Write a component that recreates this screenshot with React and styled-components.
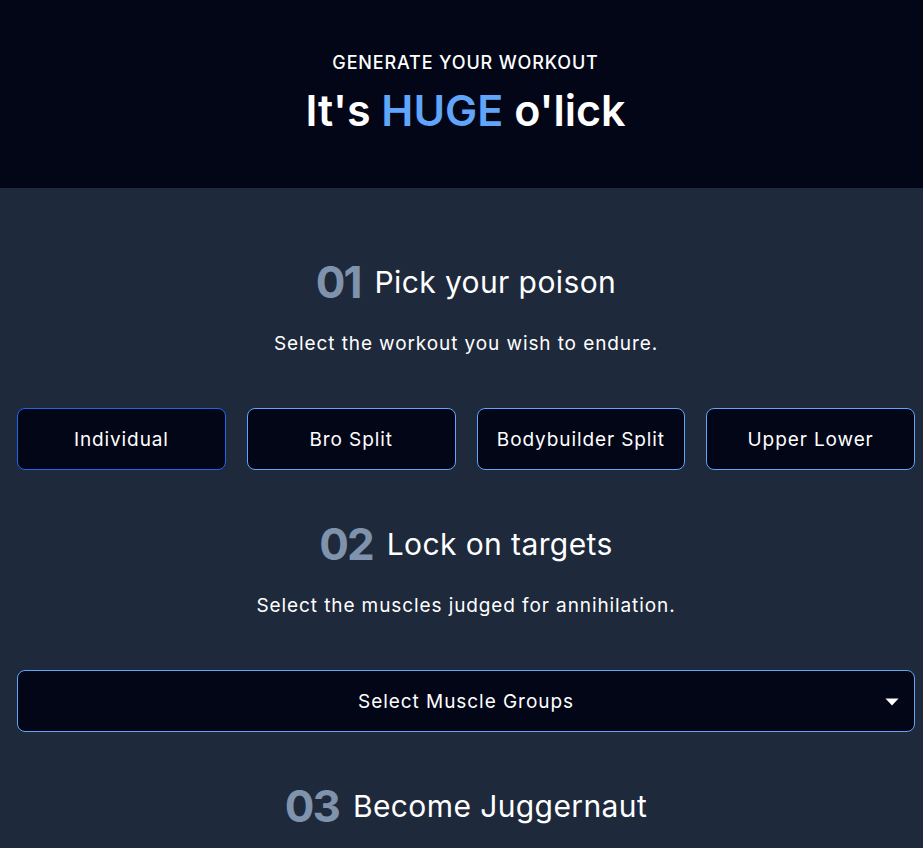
import React, { useState } from "react";
import styled, { createGlobalStyle } from "styled-components";

const GlobalStyle = createGlobalStyle`
  * { box-sizing: border-box; }
  body {
    margin: 0;
    background: #1e293b;
    font-family: "Inter", "Noto Sans", sans-serif;
    color: #fff;
  }
`;

const splits = ["Individual", "Bro Split", "Bodybuilder Split", "Upper Lower"];

export default function App() {
  const [active, setActive] = useState("Individual");
  return (
    <>
      <GlobalStyle />
      <Hero>
        <Kicker>GENERATE YOUR WORKOUT</Kicker>
        <Title>
          It's <Blue>HUGE</Blue> o'lick
        </Title>
      </Hero>
      <Main>
        <Section>
          <Header>
            <Num>01</Num>
            <HeadText>Pick your poison</HeadText>
          </Header>
          <Sub>Select the workout you wish to endure.</Sub>
          <Grid>
            {splits.map((s) => (
              <Choice key={s} $active={active === s} onClick={() => setActive(s)}>
                {s}
              </Choice>
            ))}
          </Grid>
        </Section>
        <Section>
          <Header>
            <Num>02</Num>
            <HeadText>Lock on targets</HeadText>
          </Header>
          <Sub>Select the muscles judged for annihilation.</Sub>
          <Dropdown>
            <span>Select Muscle Groups</span>
            <Caret>
              <svg width="14" height="8" viewBox="0 0 14 8">
                <path d="M0.5 0.5h13L7 7.5z" fill="#fff" />
              </svg>
            </Caret>
          </Dropdown>
        </Section>
        <Section>
          <Header>
            <Num>03</Num>
            <HeadText>Become Juggernaut</HeadText>
          </Header>
        </Section>
      </Main>
    </>
  );
}

const Hero = styled.header`
  background: #020617;
  height: 188px;
  display: flex;
  flex-direction: column;
  align-items: center;
  padding: 52px 0 0 8px;
`;
const Kicker = styled.p`
  margin: 0;
  font-size: 18px;
  font-weight: 500;
  line-height: 22px;
  letter-spacing: 0.85px;
`;
const Title = styled.h1`
  margin: 10px 0 0;
  font-size: 43px;
  font-weight: 600;
  line-height: 52px;
`;
const Blue = styled.span`
  color: #60a5fa;
`;
const Main = styled.main`
  padding: 69px 8px 0 17px;
  display: flex;
  flex-direction: column;
  gap: 49px;
`;
const Section = styled.section`
  display: flex;
  flex-direction: column;
  align-items: center;
`;
const Header = styled.div`
  display: flex;
  align-items: center;
  gap: 14px;
  height: 50px;
`;
const Num = styled.span`
  font-size: 44px;
  font-weight: 700;
  letter-spacing: -2px;
  color: #8093ad;
`;
const HeadText = styled.h2`
  margin: 0;
  font-size: 30px;
  font-weight: 400;
  letter-spacing: 0.4px;
`;
const Sub = styled.p`
  margin: 25px 0 0;
  font-size: 19px;
  line-height: 24px;
  letter-spacing: 0.9px;
`;
const Grid = styled.div`
  margin-top: 52px;
  width: 100%;
  display: grid;
  grid-template-columns: repeat(4, 1fr);
  gap: 21px;
`;
const Choice = styled.button`
  height: 62px;
  background: #020617;
  border: 1px solid ${(p) => (p.$active ? "#2563eb" : "#60a5fa")};
  border-radius: 8px;
  color: #fff;
  font-family: inherit;
  font-size: 19px;
  letter-spacing: 0.9px;
  cursor: pointer;
`;
const Dropdown = styled.div`
  margin-top: 52px;
  width: 100%;
  height: 62px;
  position: relative;
  display: flex;
  align-items: center;
  justify-content: center;
  background: #020617;
  border: 1px solid #60a5fa;
  border-radius: 8px;
  font-size: 19px;
  letter-spacing: 0.95px;
`;
const Caret = styled.span`
  position: absolute;
  right: 15px;
  top: 27px;
  display: flex;
`;
